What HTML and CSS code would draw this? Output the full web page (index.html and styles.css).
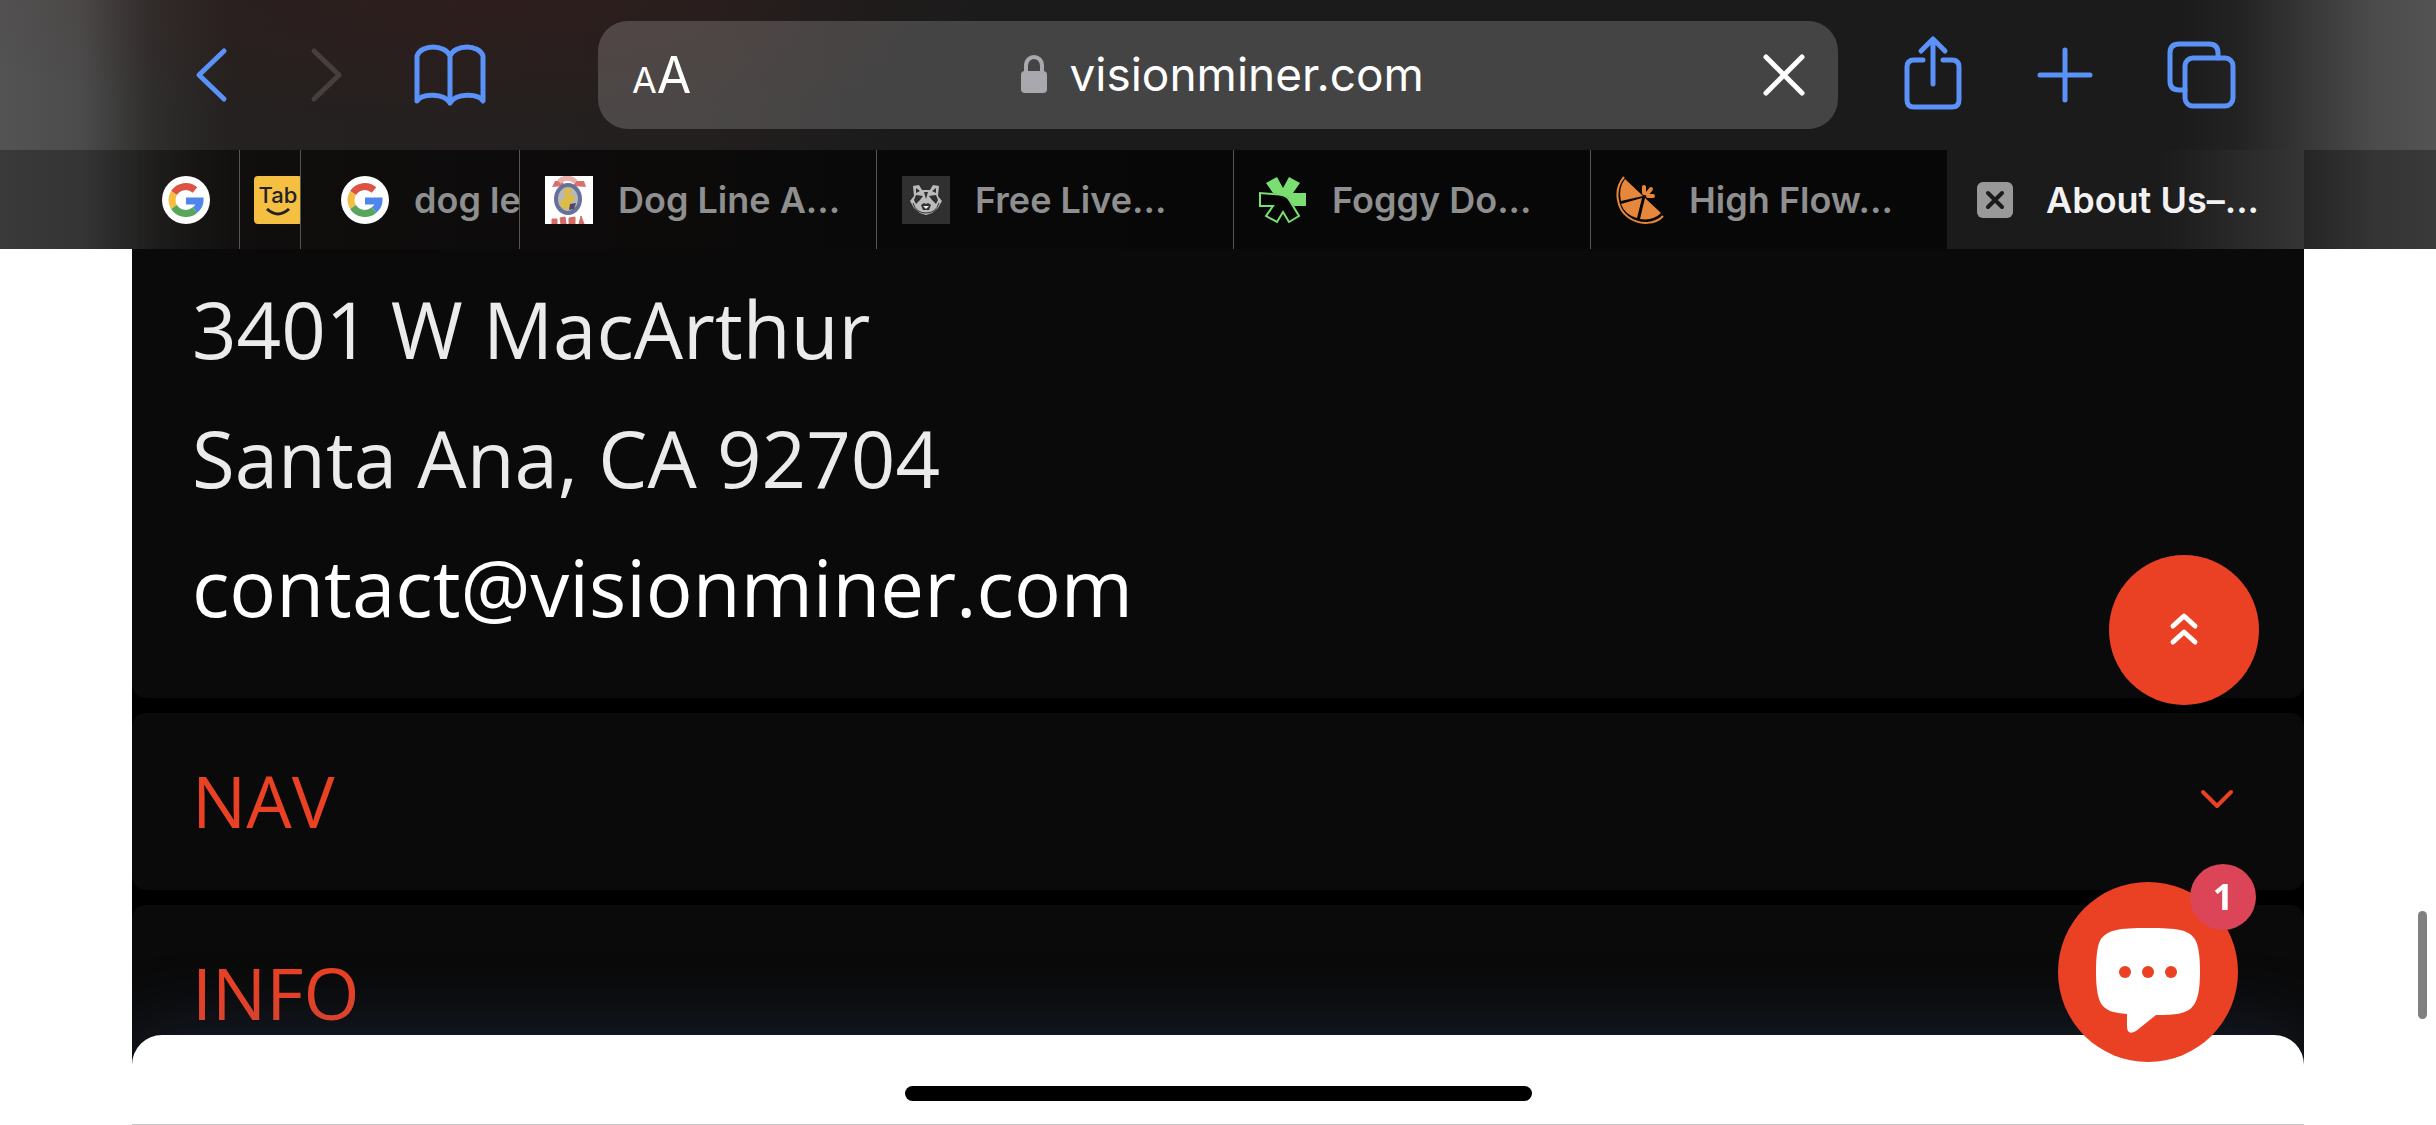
FILE: index.html
```
<!DOCTYPE html>
<html lang="en">
  <head>
    <meta charset="utf-8">
    <title>About Us – Vision Miner</title>
    <link rel="stylesheet" href="styles.css">
  </head>
  <body>
    <header class="browser">
      <div class="toolbar">
        <div class="nav-buttons">
          <button class="icon-btn" aria-label="Back">
            <svg width="34" height="60" viewBox="0 0 34 60"><path d="M30 6L5 30L30 54"/></svg>
          </button>
          <button class="icon-btn forward" aria-label="Forward" disabled>
            <svg width="34" height="60" viewBox="0 0 34 60"><path d="M4 6L29 30L4 54"/></svg>
          </button>
          <button class="icon-btn" aria-label="Bookmarks">
            <svg width="76" height="64" viewBox="0 0 76 64"><path d="M38 13C33 1 9 1 5 13V58C10 50 32 50 38 60C44 50 66 50 71 58V13C67 1 43 1 38 13V60"/></svg>
          </button>
        </div>
        <div class="url-bar">
          <button class="text-size" aria-label="Text size"><span class="small-a">A</span><span class="big-a">A</span></button>
          <div class="address">
            <svg class="lock" width="26" height="38" viewBox="0 0 26 38"><rect y="16" width="26" height="22" rx="4"/><path d="M5 17V11C5 -1 21 -1 21 11V17"/></svg>
            <span>visionminer.com</span>
          </div>
          <button class="icon-btn stop" aria-label="Stop loading">
            <svg width="44" height="44" viewBox="0 0 44 44"><path d="M4 4L40 40M40 4L4 40"/></svg>
          </button>
        </div>
        <div class="page-buttons">
          <button class="icon-btn" aria-label="Share">
            <svg width="62" height="80" viewBox="0 0 62 80"><path d="M21 25H12Q5 25 5 32V65Q5 72 12 72H50Q57 72 57 65V32Q57 25 50 25H41M31 49V5M19 16L31 4L43 16"/></svg>
          </button>
          <button class="icon-btn" aria-label="New tab">
            <svg width="58" height="58" viewBox="0 0 58 58"><path d="M29 4V54M4 29H54"/></svg>
          </button>
          <button class="icon-btn" aria-label="Show tabs">
            <svg width="72" height="70" viewBox="0 0 72 70"><path d="M19 50H13Q4 50 4 41V13Q4 4 13 4H43Q52 4 52 13V18"/><rect x="19" y="18" width="48" height="48" rx="8"/></svg>
          </button>
        </div>
      </div>

      <nav class="tabs">
        <a href="#" class="tab tab-first" aria-label="Google">
          <svg class="favicon" viewBox="0 0 48 48"><use href="#google"/></svg>
        </a>
        <a href="#" class="tab tab-second">
          <span class="tab-logo">Tab<svg width="26" height="8" viewBox="0 0 26 8"><path d="M2 1Q13 11 24 1"/></svg></span>
        </a>
        <a href="#" class="tab tab-third">
          <svg class="favicon" viewBox="0 0 48 48"><use href="#google"/></svg>
          <span>dog le</span>
        </a>
        <a href="#" class="tab">
          <svg class="favicon" viewBox="0 0 48 48">
            <rect width="48" height="48" fill="#fff"/>
            <path d="M7 11L10 5H17L20 10zM28 10L31 5H39L41 11z" fill="#d8716c"/>
            <path d="M14 6Q22 -2 31 6" fill="none" stroke="#ebb0ac" stroke-width="5"/>
            <ellipse cx="23" cy="23" rx="12" ry="14" fill="#b9b8b5" stroke="#65719d" stroke-width="4"/>
            <path d="M19 13L27 12L25 18L31 22L26 26L28 31L19 34L14 27L20 22z" fill="#dcbc45"/>
            <path d="M25 28L31 27L29 33L24 34z" fill="#51456e"/>
            <path d="M7 48V43H12V48zM16 48L15 42L20 41L21 48zM24 48V42L30 41V48zM34 48L36 40L39 48z" fill="#d66a65" stroke="#d66a65"/>
          </svg>
          <span>Dog Line A...</span>
        </a>
        <a href="#" class="tab">
          <svg class="favicon" viewBox="0 0 48 48">
            <rect width="48" height="48" fill="#303030"/>
            <path d="M12 20L11 10L17 9L20 14H28L31 9L37 10L36 20L40 25L36 32L30 37L24 39L18 37L12 32L8 25z" fill="#bbb"/>
            <path d="M14 12L18 15L14 17zM34 12L30 15L34 17zM14 19L21 20L18 24L14 28L12 24zM34 19L27 20L30 24L34 28L36 24zM22 16H26L24 23zM19 29L22 27L24 28L26 27L29 29L27 34H21z" fill="#303030"/>
            <path d="M11 27Q14 37 24 37Q34 37 37 27" fill="none" stroke="#303030"/>
            <path d="M21 30H27L24 33z" fill="#eee"/>
          </svg>
          <span>Free Live...</span>
        </a>
        <a href="#" class="tab">
          <svg class="favicon" viewBox="0 0 48 48">
            <path d="M7 7L18 1L24 12L30 1L41 7L34 17H47V30H35L29 21L22 19L14 17z" fill="#7ade72"/>
            <path d="M14 18L1 17V30H14L7 40L18 46L24 36L30 46L40 40L31 25Q28 18 14 18z" fill="#050505" stroke="#7ade72" stroke-width="2"/>
          </svg>
          <span>Foggy Do...</span>
        </a>
        <a href="#" class="tab">
          <svg class="favicon" viewBox="0 0 48 48">
            <path d="M9 3L27 20L5 25Q2 12 9 3zM5 28L26 22L21 42Q9 39 5 28zM24 43L29 22L45 37Q37 45 24 43z" fill="#e6873c"/>
            <path d="M8 1C-3 14 1 33 12 41C24 50 40 48 47 40" fill="none" stroke="#e6873c" stroke-width="2"/>
            <path d="M28 17V11M31 18L35 13M32 20H37" stroke="#e6873c" stroke-width="4" stroke-linecap="round"/>
          </svg>
          <span>High Flow...</span>
        </a>
        <a href="#" class="tab tab-active">
          <svg class="close" width="36" height="36" viewBox="0 0 36 36"><rect width="36" height="36" rx="6"/><path d="M11 11L25 25M25 11L11 25"/></svg>
          <span>About Us–...</span>
        </a>
      </nav>
    </header>

    <main class="page">
      <section class="panel contact">
        <p>3401 W MacArthur</p>
        <p>Santa Ana, CA 92704</p>
        <p><a href="mailto:contact@visionminer.com">contact@visionminer.com</a></p>
      </section>
      <button class="panel menu">
        <span>NAV</span>
        <svg width="36" height="24" viewBox="0 0 36 24"><path d="M4 4L18 18L32 4"/></svg>
      </button>
      <button class="panel menu">
        <span>INFO</span>
      </button>
    </main>

    <div class="sheet"></div>
    <div class="home-bar"></div>
    <div class="scrollbar"></div>

    <button class="to-top" aria-label="Back to top">
      <svg width="32" height="36" viewBox="0 0 32 36"><path d="M5 14L16 4L27 14M5 30L16 20L27 30"/></svg>
    </button>
    <button class="chat" aria-label="Open chat">
      <svg width="104" height="106" viewBox="0 0 104 106">
        <path d="M52 0C82 0 92 2 98 10Q104 17 104 44Q104 70 97 78C91 86 80 87 60 87L40 103Q31 108 31 98V86C18 85 11 83 6 77Q0 69 0 44Q0 18 5 11C12 2 22 0 52 0z" fill="#fff"/>
        <g fill="#ea4124"><circle cx="29" cy="44" r="6"/><circle cx="52" cy="44" r="6"/><circle cx="75" cy="44" r="6"/></g>
      </svg>
      <span class="badge">1</span>
    </button>

    <!-- google icon, used by two tabs -->
    <svg class="defs" width="0" height="0">
      <symbol id="google" viewBox="0 0 48 48">
        <circle cx="24" cy="24" r="24" fill="#fff"/>
        <g fill="none" stroke-width="7">
          <path d="M33 14A14 14 0 0 0 12 17" stroke="#dc5244"/>
          <path d="M12 17A14 14 0 0 0 12 31" stroke="#f3be42"/>
          <path d="M12 31A14 14 0 0 0 33 34" stroke="#58a55c"/>
          <path d="M33 34Q38 30 38 25H24" stroke="#4f86ec"/>
        </g>
      </symbol>
    </svg>
  </body>
</html>
```

FILE: styles.css
```
* {
  box-sizing: border-box;
}

body {
  margin: 0;
  min-height: 100vh;
  overflow: hidden;
  background-color: #fff;
  font-family: Inter, "Liberation Sans", sans-serif;
}

button {
  border: none;
  padding: 0;
  background: none;
  font-family: inherit;
  color: inherit;
  cursor: pointer;
}

a {
  color: inherit;
  text-decoration: none;
}

svg {
  display: block;
  flex-shrink: 0;
}

/* Browser chrome */
.browser {
  background: radial-gradient(ellipse 550px 130px at 480px 0, rgba(70, 25, 25, 0.3), transparent),
    linear-gradient(to right, #535353, #4c4c4c 80px, #2f2e2d 150px, #242120 230px, #231f1e 700px, #1b1b1b 900px, #1b1b1b calc(100% - 260px), #222 calc(100% - 200px), #363636 calc(100% - 132px), #4c4c4c calc(100% - 60px), #535353);
}

.toolbar {
  display: flex;
  align-items: center;
  height: 150px;
  padding: 0 198px 0 194px;
}

.nav-buttons,
.page-buttons {
  display: flex;
  align-items: center;
}

.nav-buttons {
  gap: 82px;
  margin-right: 110px;
}

.nav-buttons .forward {
  margin-right: -14px;
}

.page-buttons {
  gap: 72px;
  margin-left: 64px;
}

.icon-btn svg {
  fill: none;
  stroke: #5a92f8;
  stroke-width: 5;
  stroke-linecap: round;
  stroke-linejoin: round;
}

.icon-btn.forward svg {
  stroke: #463f3e;
}

.icon-btn.stop svg {
  stroke: #fff;
}

.url-bar {
  flex: 1;
  display: flex;
  align-items: center;
  justify-content: space-between;
  height: 108px;
  padding: 0 32px 0 34px;
  border-radius: 30px;
  background-color: rgba(255, 255, 255, 0.18);
  color: #fff;
}

.text-size {
  display: flex;
  align-items: baseline;
}

.small-a {
  font-size: 36px;
}

.big-a {
  font-size: 50px;
}

.address {
  display: flex;
  align-items: center;
  gap: 22px;
  margin-right: 8px;
  padding-bottom: 2px;
  font-size: 46px;
}

.lock {
  fill: #a9a8ae;
}

.lock path {
  fill: none;
  stroke: #a9a8ae;
  stroke-width: 4;
}

/* Tabs */
.tabs {
  display: flex;
  height: 99px;
  padding: 0 132px;
  background-color: rgba(0, 0, 0, 0.3);
  background-image: linear-gradient(to right, transparent 132px, rgba(0, 0, 0, 0.4) 260px, rgba(0, 0, 0, 0.6) 1200px, rgba(0, 0, 0, 0.6) calc(100% - 489px), transparent calc(100% - 489px));
}

.tab {
  flex: 1 1 100px;
  display: flex;
  align-items: center;
  gap: 25px;
  min-width: 0;
  padding-left: 25px;
  border-left: 1px solid #555;
  overflow: hidden;
  white-space: nowrap;
  font-size: 36px;
  font-weight: 600;
  color: #8f8f8f;
}

.tab-first {
  flex: 0 0 107px;
  padding-left: 29px;
  border-left-color: transparent;
}

.tab-second {
  flex: 0 0 61px;
  padding-left: 14px;
}

.tab-third {
  flex: 0 0 219px;
  padding-left: 40px;
}

.tab-active {
  padding-left: 30px;
  gap: 33px;
  border-left: none;
  background: linear-gradient(to right, #1b1b1b 60%, #353535);
  color: #f2f2f2;
}

.favicon {
  width: 48px;
  height: 48px;
}

.tab-logo {
  display: flex;
  flex-direction: column;
  align-items: center;
  flex-shrink: 0;
  width: 48px;
  height: 48px;
  padding-top: 6px;
  border-radius: 4px;
  background-color: #f5bf42;
  color: #222;
  font-size: 22px;
  font-weight: 500;
  line-height: 26px;
}

.tab-logo path {
  fill: none;
  stroke: #222;
  stroke-width: 3;
}

.close rect {
  fill: #999;
}

.close path {
  stroke: #1b1b1b;
  stroke-width: 4;
  stroke-linecap: round;
}

/* Page */
.page {
  display: flex;
  flex-direction: column;
  gap: 15px;
  margin: 0 132px;
  background-color: #000;
  font-family: "Open Sans", "Noto Sans", sans-serif;
}

.panel {
  padding: 0 60px;
  border-radius: 14px;
  background-color: #0a0a0a;
}

.contact {
  padding-top: 16px;
  padding-bottom: 46px;
  border-radius: 0 0 14px 14px;
  color: #ebebeb;
  font-size: 78px;
  line-height: 129px;
}

.contact p {
  margin: 0;
}

.contact a {
  color: #fff;
}

.menu {
  display: flex;
  align-items: center;
  justify-content: space-between;
  height: 177px;
  padding-right: 69px;
  padding-bottom: 4px;
  color: #ea4124;
  font-size: 72px;
}

.menu svg {
  fill: none;
  stroke: #ea4124;
  stroke-width: 4;
  stroke-linecap: round;
  stroke-linejoin: round;
}

/* Things that sit over the page */
.sheet {
  position: fixed;
  left: 132px;
  right: 132px;
  bottom: 0;
  height: 90px;
  border-radius: 30px 30px 0 0;
  background: linear-gradient(#c4c4c4, #c4c4c4) bottom / 100% 1px no-repeat #fff;
  box-shadow: 0 0 80px rgba(63, 90, 143, 0.3);
  clip-path: inset(-90px 0 0 0);
}

.home-bar {
  position: fixed;
  left: 50%;
  bottom: 24px;
  width: 627px;
  height: 15px;
  margin-left: -313px;
  border-radius: 8px;
  background-color: #000;
}

.scrollbar {
  position: fixed;
  right: 9px;
  bottom: 106px;
  width: 9px;
  height: 108px;
  border-radius: 5px;
  background-color: #808080;
}

.to-top,
.chat {
  position: fixed;
  display: flex;
  align-items: center;
  justify-content: center;
  border-radius: 50%;
  background-color: #ea4124;
}

.to-top {
  right: 177px;
  bottom: 420px;
  width: 150px;
  height: 150px;
}

.to-top svg {
  fill: none;
  stroke: #fff;
  stroke-width: 5;
  stroke-linecap: round;
  stroke-linejoin: round;
}

.chat {
  right: 198px;
  bottom: 63px;
  width: 180px;
  height: 180px;
  padding-top: 18px;
}

.badge {
  position: absolute;
  top: -18px;
  right: -18px;
  width: 66px;
  height: 66px;
  border-radius: 50%;
  background-color: #dc4458;
  color: #fff;
  font-family: "Open Sans", "Noto Sans", sans-serif;
  font-size: 36px;
  font-weight: 700;
  line-height: 66px;
}

.defs {
  position: absolute;
}
```
